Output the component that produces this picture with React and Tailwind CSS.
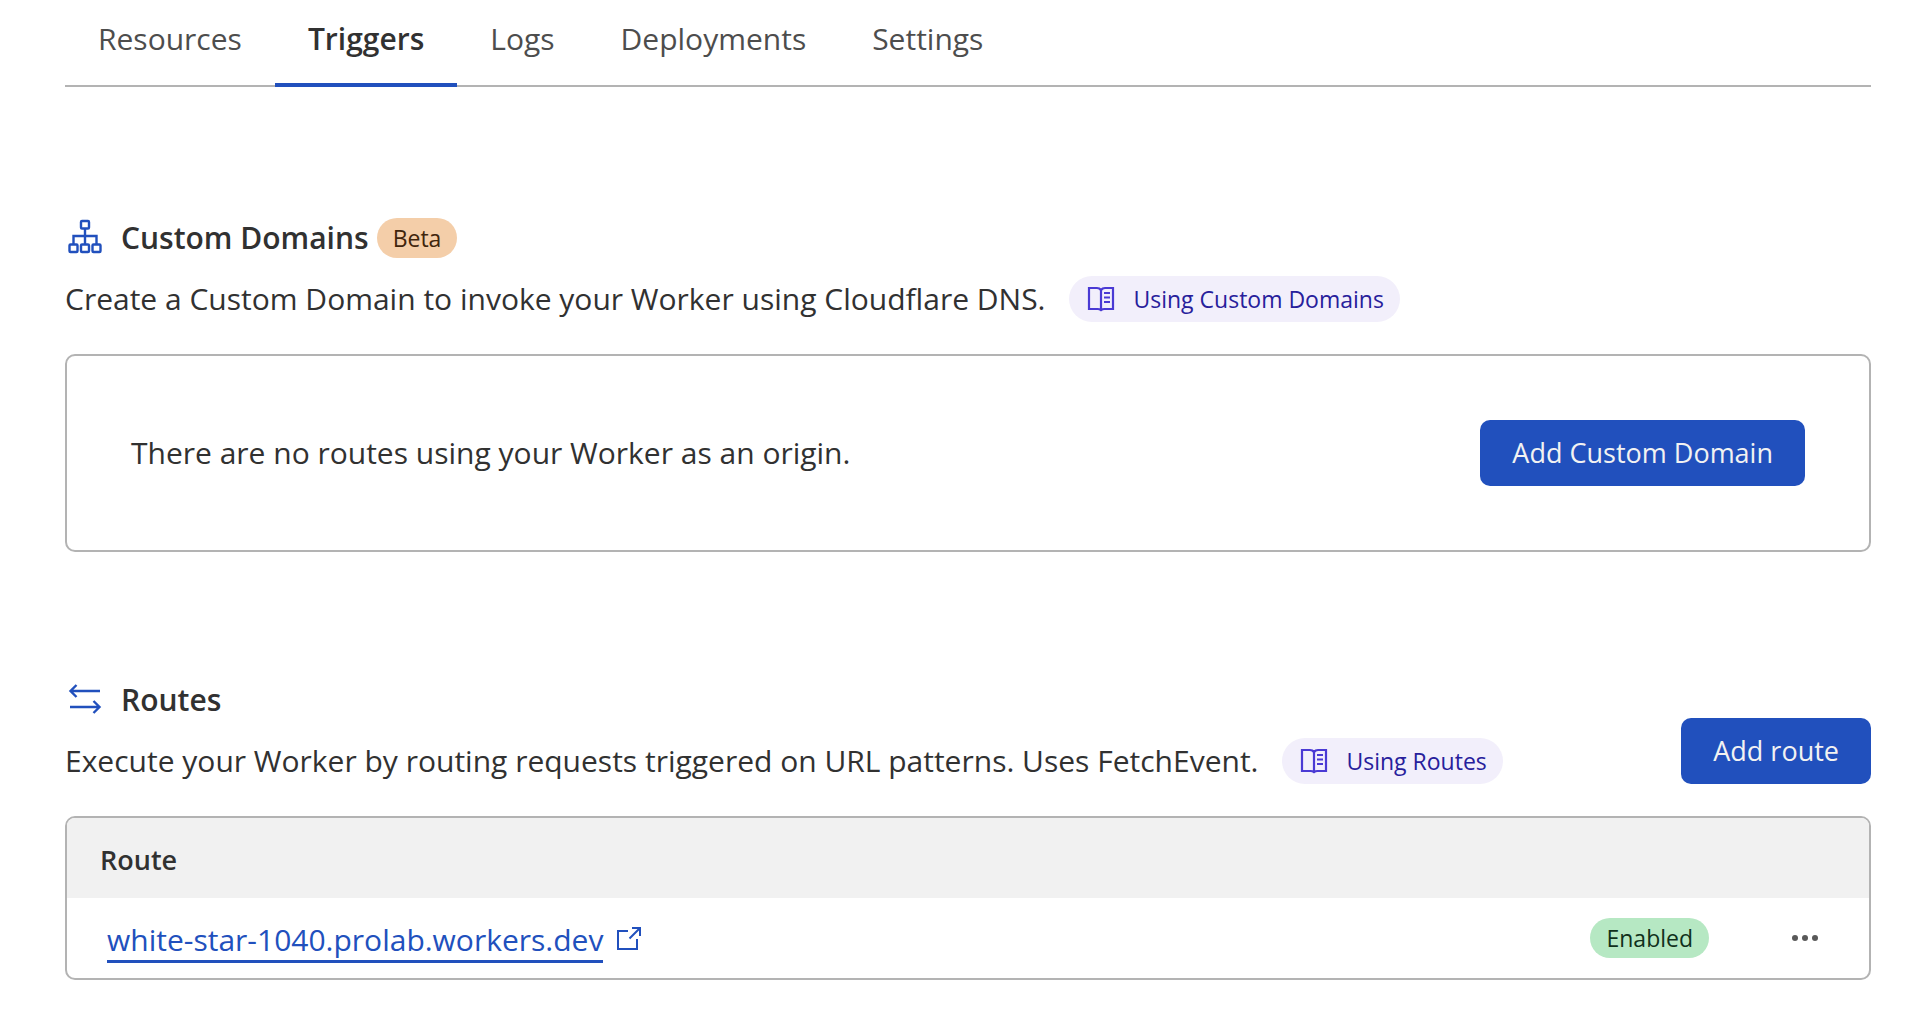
import React from 'react';

const TABS = ['Resources', 'Triggers', 'Logs', 'Deployments', 'Settings'];

const ROUTES = [{ host: 'white-star-1040.prolab.workers.dev', status: 'Enabled' }];

const DomainsIcon = () => (
    <svg className="w-10 h-10 shrink-0 text-[#2150bd]" viewBox="0 0 40 40" fill="none" stroke="currentColor" strokeWidth="2.4" aria-hidden="true">
        <rect x="16" y="3" width="8" height="7.5" rx="1" />
        <rect x="4.500" y="26.500" width="8" height="7.5" rx="1" />
        <rect x="16" y="26.500" width="8" height="7.5" rx="1" />
        <rect x="27.500" y="26.500" width="8" height="7.5" rx="1" />
        <path d="M20 10.5v16M8.500 26.500V18h23v8.500" />
    </svg>
);

const RoutesIcon = () => (
    <svg className="w-10 h-10 shrink-0 text-[#2150bd]" viewBox="0 0 40 40" fill="none" stroke="currentColor" strokeWidth="2.4" aria-hidden="true">
        <path d="M35 11H5.5M11.5 5L5.500 11l6 6" />
        <path d="M5 27h29.500M28.500 21l6 6-6 6" />
    </svg>
);

const BookIcon = () => (
    <svg className="w-8 h-8 shrink-0 text-[#4a3ad4]" viewBox="0 0 32 32" fill="none" stroke="currentColor" strokeWidth="2.2" aria-hidden="true">
        <path d="M16 7C15 5.600 13.800 5 12 5H4v21h8.600c1.600 0 2.600.4 3.400 1 .8-.6 1.800-1 3.400-1H28V5h-8c-1.800 0-3 .6-4 2z" />
        <path d="M16 7v20.500M19 10h6M19 14.500h6M19 19h6" />
    </svg>
);

const ExternalIcon = () => (
    <svg className="w-6 h-6 shrink-0" viewBox="0 0 24 24" fill="none" stroke="currentColor" strokeWidth="2" aria-hidden="true">
        <path d="M11 5H1v18h19V13" />
        <path d="M15 2h8v8M23 2L12.500 12.500" />
    </svg>
);

const DocsLink = ({ children }) => (
    <a href="#docs" className="flex h-[46px] shrink-0 items-center gap-4 rounded-full bg-[#f2effb] px-4 text-[23px] text-[#27209b]">
        <BookIcon />
        {children}
    </a>
);

const PrimaryButton = ({ children }) => (
    <button type="button" className="h-[66px] shrink-0 rounded-[10px] bg-[#2150bd] px-8 text-[27px] text-[#f2f2f2]">
        {children}
    </button>
);

export default function App() {
    return (
        <main className="bg-white pl-[65px] pr-[34px] font-['Open_Sans',sans-serif] text-[30px] leading-[40px] text-[#313131]">
            <nav className="flex border-b-2 border-[#b3b3b3]">
                {TABS.map((tab) => (
                    <a
                        key={tab}
                        href={`#${tab.toLowerCase()}`}
                        className={tab === 'Triggers'
                            ? '-mb-0.5 border-b-4 border-[#2150bd] px-[33px] pt-[19px] pb-6 font-semibold'
                            : 'px-[33px] pt-[19px] pb-6 text-[#4d4d4d]'}
                    >
                        {tab}
                    </a>
                ))}
            </nav>

            <section className="pt-[131px]">
                <div className="flex items-center">
                    <DomainsIcon />
                    <h2 className="ml-4 font-semibold">Custom Domains</h2>
                    <span className="ml-2 rounded-full bg-[#f4cea9] px-4 text-[23px] text-[#40250c]">Beta</span>
                </div>
                <div className="mt-[18px] flex items-center gap-6">
                    <p>Create a Custom Domain to invoke your Worker using Cloudflare DNS.</p>
                    <DocsLink>Using Custom Domains</DocsLink>
                </div>
                <div className="mt-8 flex items-center justify-between rounded-[10px] border-2 border-[#b3b3b3] p-16">
                    <p>There are no routes using your Worker as an origin.</p>
                    <PrimaryButton>Add Custom Domain</PrimaryButton>
                </div>
            </section>

            <section className="pt-32">
                <div className="flex items-end justify-between">
                    <div>
                        <div className="flex items-center">
                            <RoutesIcon />
                            <h2 className="ml-4 font-semibold">Routes</h2>
                        </div>
                        <div className="mt-[18px] flex items-center gap-6">
                            <p>Execute your Worker by routing requests triggered on URL patterns. Uses FetchEvent.</p>
                            <DocsLink>Using Routes</DocsLink>
                        </div>
                    </div>
                    <PrimaryButton>Add route</PrimaryButton>
                </div>
                <div className="mt-8 overflow-hidden rounded-[10px] border-2 border-[#b3b3b3]">
                    <table className="w-full">
                        <thead className="bg-[#f1f1f1]">
                            <tr className="h-20 text-left text-[27px]">
                                <th colSpan={3} className="px-[33px] pt-1 font-semibold">Route</th>
                            </tr>
                        </thead>
                        <tbody>
                            {ROUTES.map((route) => (
                                <tr key={route.host} className="h-20">
                                    <td className="pl-10">
                                        <a href={`https://${route.host}`} className="inline-flex items-center gap-[14px] text-[#2150bd]">
                                            <span className="border-b-3 border-[#2150bd] pt-1.5">{route.host}</span>
                                            <ExternalIcon />
                                        </a>
                                    </td>
                                    <td className="w-px">
                                        <span className="block rounded-full bg-[#b6e8c3] px-4 text-[23px] text-[#10301b]">{route.status}</span>
                                    </td>
                                    <td className="w-40 pr-4 text-right">
                                        <button type="button" aria-label="Route actions" className="inline-flex h-12 w-24 items-center justify-center gap-1 align-middle">
                                            <span className="size-1.5 rounded-full bg-[#595959]" />
                                            <span className="size-1.5 rounded-full bg-[#595959]" />
                                            <span className="size-1.5 rounded-full bg-[#595959]" />
                                        </button>
                                    </td>
                                </tr>
                            ))}
                        </tbody>
                    </table>
                </div>
            </section>
        </main>
    );
}
